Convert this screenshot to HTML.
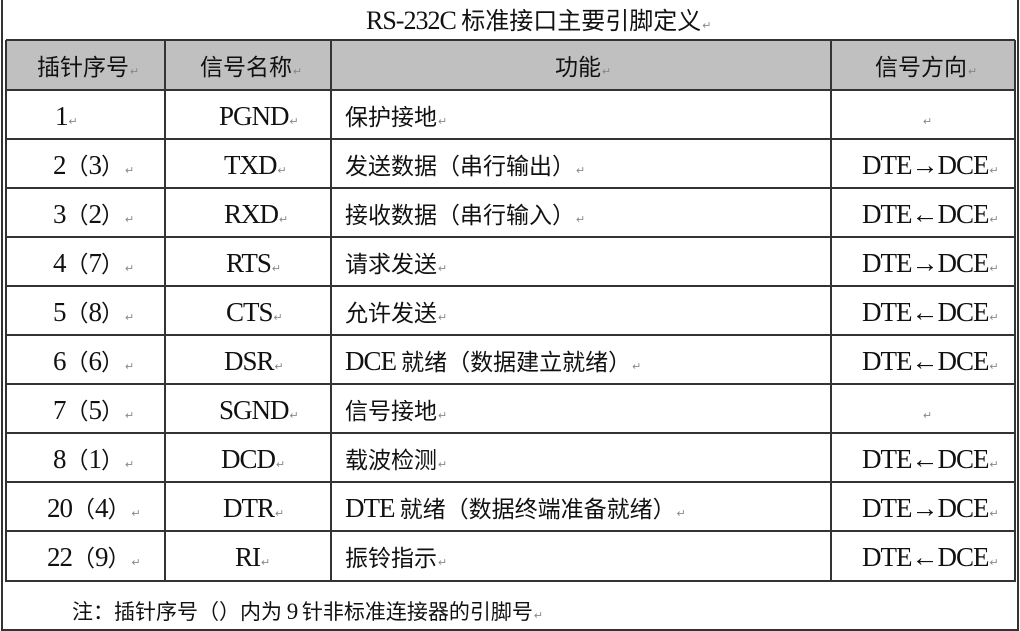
<!DOCTYPE html>
<html><head><meta charset="utf-8"><style>
html,body{margin:0;padding:0;background:#fff;}
body{width:1020px;height:631px;position:relative;overflow:hidden;font-family:"Liberation Serif","Noto Serif CJK SC",serif;color:#111;}
.frame{position:absolute;left:1px;top:-2px;width:1014px;height:629px;border:2px solid #333;}
.t{position:absolute;font-size:23px;line-height:30px;white-space:nowrap;font-family:"Noto Sans CJK SC",sans-serif;}
.l{font-family:"Liberation Serif",serif;font-size:27px;letter-spacing:-1px;}
.r{font-size:11px;color:#888;margin-left:1px;font-family:"Liberation Sans",sans-serif;}
.hl{position:absolute;left:6px;width:1009px;height:2px;background:#333;}
.vl{position:absolute;top:40px;height:542px;width:2px;background:#333;}
.hdr{position:absolute;left:6px;top:40px;width:1009px;height:50px;background:#c0c0c0;}
</style></head><body>
<div class="frame"></div>
<div class="t" style="left:366px;top:4px;font-size:24px;"><span class="l" style="font-size:26px">RS-232C</span> 标准接口主要引脚定义<span class="r">↵</span></div>
<div class="hdr"></div>
<div class="hl" style="top:39px"></div>
<div class="hl" style="top:89px"></div>
<div class="hl" style="top:138px"></div>
<div class="hl" style="top:187px"></div>
<div class="hl" style="top:236px"></div>
<div class="hl" style="top:285px"></div>
<div class="hl" style="top:334px"></div>
<div class="hl" style="top:383px"></div>
<div class="hl" style="top:432px"></div>
<div class="hl" style="top:481px"></div>
<div class="hl" style="top:530px"></div>
<div class="hl" style="top:580px"></div>
<div class="vl" style="left:5px"></div>
<div class="vl" style="left:164px"></div>
<div class="vl" style="left:330px"></div>
<div class="vl" style="left:830px"></div>
<div class="vl" style="left:1014px"></div>

<div class="t" style="left:37px;top:50px">插针序号<span class="r">↵</span></div>
<div class="t" style="left:200px;top:50px">信号名称<span class="r">↵</span></div>
<div class="t" style="left:555px;top:50px">功能<span class="r">↵</span></div>
<div class="t" style="left:875px;top:50px">信号方向<span class="r">↵</span></div>

<div class="t" style="left:55px;top:100px"><span class="l">1</span><span class="r">↵</span></div>
<div class="t" style="left:219px;top:100px"><span class="l">PGND</span><span class="r">↵</span></div>
<div class="t" style="left:345px;top:100px">保护接地<span class="r">↵</span></div>
<div class="t" style="left:922px;top:100px"><span class="r">↵</span></div>

<div class="t" style="left:53px;top:149px"><span class="l">2</span>（<span class="l">3</span>）<span class="r">↵</span></div>
<div class="t" style="left:224px;top:149px"><span class="l">TXD</span><span class="r">↵</span></div>
<div class="t" style="left:345px;top:149px">发送数据（串行输出）<span class="r">↵</span></div>
<div class="t" style="left:862px;top:149px"><span class="l">DTE→DCE</span><span class="r">↵</span></div>

<div class="t" style="left:53px;top:198px"><span class="l">3</span>（<span class="l">2</span>）<span class="r">↵</span></div>
<div class="t" style="left:224px;top:198px"><span class="l">RXD</span><span class="r">↵</span></div>
<div class="t" style="left:345px;top:198px">接收数据（串行输入）<span class="r">↵</span></div>
<div class="t" style="left:862px;top:198px"><span class="l">DTE←DCE</span><span class="r">↵</span></div>

<div class="t" style="left:53px;top:247px"><span class="l">4</span>（<span class="l">7</span>）<span class="r">↵</span></div>
<div class="t" style="left:226px;top:247px"><span class="l">RTS</span><span class="r">↵</span></div>
<div class="t" style="left:345px;top:247px">请求发送<span class="r">↵</span></div>
<div class="t" style="left:862px;top:247px"><span class="l">DTE→DCE</span><span class="r">↵</span></div>

<div class="t" style="left:53px;top:296px"><span class="l">5</span>（<span class="l">8</span>）<span class="r">↵</span></div>
<div class="t" style="left:226px;top:296px"><span class="l">CTS</span><span class="r">↵</span></div>
<div class="t" style="left:345px;top:296px">允许发送<span class="r">↵</span></div>
<div class="t" style="left:862px;top:296px"><span class="l">DTE←DCE</span><span class="r">↵</span></div>

<div class="t" style="left:53px;top:345px"><span class="l">6</span>（<span class="l">6</span>）<span class="r">↵</span></div>
<div class="t" style="left:224px;top:345px"><span class="l">DSR</span><span class="r">↵</span></div>
<div class="t" style="left:345px;top:345px"><span class="l">DCE</span> 就绪（数据建立就绪）<span class="r">↵</span></div>
<div class="t" style="left:862px;top:345px"><span class="l">DTE←DCE</span><span class="r">↵</span></div>

<div class="t" style="left:53px;top:394px"><span class="l">7</span>（<span class="l">5</span>）<span class="r">↵</span></div>
<div class="t" style="left:219px;top:394px"><span class="l">SGND</span><span class="r">↵</span></div>
<div class="t" style="left:345px;top:394px">信号接地<span class="r">↵</span></div>
<div class="t" style="left:922px;top:394px"><span class="r">↵</span></div>

<div class="t" style="left:53px;top:443px"><span class="l">8</span>（<span class="l">1</span>）<span class="r">↵</span></div>
<div class="t" style="left:221px;top:443px"><span class="l">DCD</span><span class="r">↵</span></div>
<div class="t" style="left:345px;top:443px">载波检测<span class="r">↵</span></div>
<div class="t" style="left:862px;top:443px"><span class="l">DTE←DCE</span><span class="r">↵</span></div>

<div class="t" style="left:47px;top:492px"><span class="l">20</span>（<span class="l">4</span>）<span class="r">↵</span></div>
<div class="t" style="left:223px;top:492px"><span class="l">DTR</span><span class="r">↵</span></div>
<div class="t" style="left:345px;top:492px"><span class="l">DTE</span> 就绪（数据终端准备就绪）<span class="r">↵</span></div>
<div class="t" style="left:862px;top:492px"><span class="l">DTE→DCE</span><span class="r">↵</span></div>

<div class="t" style="left:47px;top:541px"><span class="l">22</span>（<span class="l">9</span>）<span class="r">↵</span></div>
<div class="t" style="left:235px;top:541px"><span class="l">RI</span><span class="r">↵</span></div>
<div class="t" style="left:345px;top:541px">振铃指示<span class="r">↵</span></div>
<div class="t" style="left:862px;top:541px"><span class="l">DTE←DCE</span><span class="r">↵</span></div>

<div class="t" style="left:72px;top:596px;font-size:21px;">注：插针序号（）内为 <span class="l" style="font-size:23px">9</span> 针非标准连接器的引脚号<span class="r">↵</span></div>
</body></html>
